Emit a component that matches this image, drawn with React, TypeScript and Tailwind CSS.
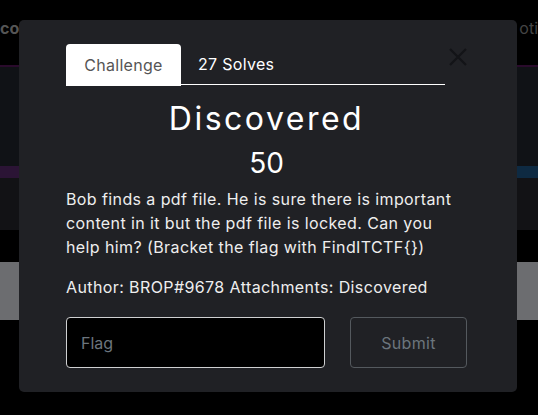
import React from "react";

function Backdrop() {
  return (
    <div className="flex flex-col h-[415px] w-full">
      <div className="h-[65px] bg-black flex items-start justify-between pt-[16px] text-[16px]">
        <span className="font-bold text-[#555]">cor</span>
        <span className="text-[#444]">oti</span>
      </div>
      <div className="h-[2px] bg-[#2a0b2c]" />
      <div className="h-[99px] bg-[#101216]" />
      <div className="h-[12px] flex">
        <div className="flex-1 bg-[#2b1435]" />
        <div className="flex-1 bg-[#0e2a42]" />
      </div>
      <div className="h-[52px] bg-[#121215]" />
      <div className="h-[32px] bg-black" />
      <div className="h-[58px] bg-[#6c6d70]" />
      <div className="flex-1 bg-black" />
    </div>
  );
}

const description =
  "Bob finds a pdf file. He is sure there is important content in it but the pdf file is locked. Can you help him? (Bracket the flag with FindITCTF{})";

export default function App() {
  return (
    <div
      className="relative w-[538px] h-[415px] overflow-hidden bg-black"
      style={{ fontFamily: "Inter, 'Noto Sans', sans-serif" }}
    >
      <Backdrop />

      {/* Modal */}
      <div className="absolute left-[19px] top-[20px] w-[498px] h-[372px] bg-[#202125] rounded-[5px] pl-[47px] pr-[50px] pt-[24px] text-white">
        <div className="flex items-start">
          <div className="flex-1 flex items-end">
            <button className="h-[42px] w-[115px] bg-white text-[#555] rounded-t-[4px] text-[16px] tracking-[0.3px]">
              Challenge
            </button>
            <div className="flex-1 h-[41px] border-b border-white flex items-center pl-[17px] mb-[1px] text-[16px] tracking-[0.3px]">
              27 Solves
            </div>
          </div>
          <button className="mt-[4px] ml-[3px] w-[19px] h-[18px] flex items-center justify-center text-[#131417]">
            <svg width="18" height="18" viewBox="0 0 18 18" fill="none" stroke="currentColor" strokeWidth="2.2">
              <path d="M1 1 L17 17 M17 1 L1 17" />
            </svg>
          </button>
        </div>

        <h2 className="mt-[14px] text-center text-[32px] leading-[38px] tracking-[2.5px]">
          Discovered
        </h2>
        <h3 className="mt-[8px] text-center text-[28px] leading-[34px]">50</h3>

        <p className="mt-[7px] text-[16px] leading-[24px] text-[#eee] tracking-[0.4px] pr-[10px]">
          {description}
        </p>
        <p className="mt-[16px] text-[16px] leading-[24px] text-[#eee] tracking-[0.4px]">
          Author: BROP#9678 Attachments: Discovered
        </p>

        <div className="mt-[18px] flex justify-between">
          <input
            placeholder="Flag"
            className="w-[259px] h-[51px] bg-black border border-[#cfd0d2] rounded-[4px] px-[14px] text-[16px] text-white placeholder:text-[#6c757d] outline-none"
          />
          <button className="w-[117px] h-[51px] border border-[#54595e] rounded-[4px] text-[16px] text-[#6c757d] tracking-[0.3px]">
            Submit
          </button>
        </div>
      </div>
    </div>
  );
}
